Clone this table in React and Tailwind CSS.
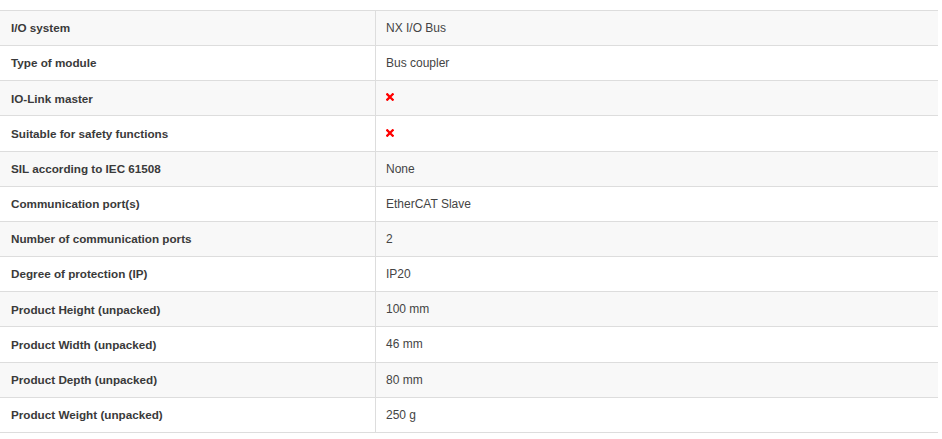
import React from "react";

const rows = [
  ["I/O system", "NX I/O Bus"],
  ["Type of module", "Bus coupler"],
  ["IO-Link master", "x"],
  ["Suitable for safety functions", "x"],
  ["SIL according to IEC 61508", "None"],
  ["Communication port(s)", "EtherCAT Slave"],
  ["Number of communication ports", "2"],
  ["Degree of protection (IP)", "IP20"],
  ["Product Height (unpacked)", "100 mm"],
  ["Product Width (unpacked)", "46 mm"],
  ["Product Depth (unpacked)", "80 mm"],
  ["Product Weight (unpacked)", "250 g"],
];

function Cross() {
  return (
    <svg width="8" height="8" viewBox="0 0 8 8" className="block -mt-[2px]">
      <path d="M1.3 1.3 L6.7 6.7 M6.7 1.3 L1.3 6.7" stroke="#ff0000" strokeWidth="2.3" strokeLinecap="square" />
    </svg>
  );
}

export default function App() {
  return (
    <div className="w-[942px] h-[439px] bg-white pt-[10px] font-['Liberation_Sans',Arial,sans-serif] text-[12px]">
      <div className="w-[938px] border-b border-[#dddddd]">
        {rows.map(([k, v], i) => (
          <div
            key={i}
            className={`flex h-[35.17px] border-t border-[#dddddd] ${i % 2 === 0 ? "bg-[#f8f8f8]" : "bg-white"}`}
          >
            <div className="w-[376px] flex items-center pl-[11px] font-bold text-[11.7px] text-[#3a3a3a] border-r border-[#dddddd]">
              {k}
            </div>
            <div className="flex-1 flex items-center pl-[10px] text-[#444444]">
              {v === "x" ? <Cross /> : v}
            </div>
          </div>
        ))}
      </div>
    </div>
  );
}
